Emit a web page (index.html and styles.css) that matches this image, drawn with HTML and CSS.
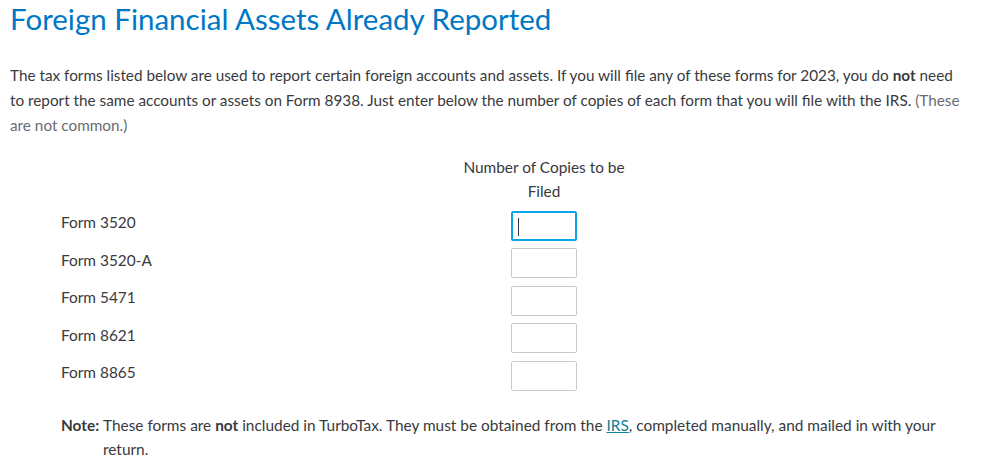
FILE: index.html
```html
<!DOCTYPE html>
<html>
<head>
<meta charset="utf-8">
<link rel="stylesheet" href="styles.css">
</head>
<body>
<main class="page">
  <h1 class="title">Foreign Financial Assets Already Reported</h1>
  <p class="intro">The tax forms listed below are used to report certain foreign accounts and assets. If you will file any of these forms for 2023, you do <b>not</b> need to report the same accounts or assets on Form 8938. Just enter below the number of copies of each form that you will file with the IRS. <span class="muted">(These are not common.)</span></p>
  <div class="grid">
    <div class="head-spacer"></div>
    <div class="col-head">Number of Copies to be Filed</div>
    <div class="label">Form 3520</div>
    <div class="cell"><div class="input focus"><span class="caret"></span></div></div>
    <div class="label">Form 3520-A</div>
    <div class="cell"><div class="input"></div></div>
    <div class="label">Form 5471</div>
    <div class="cell"><div class="input"></div></div>
    <div class="label">Form 8621</div>
    <div class="cell"><div class="input"></div></div>
    <div class="label">Form 8865</div>
    <div class="cell"><div class="input"></div></div>
  </div>
  <div class="note">
    <b class="note-label">Note:</b>
    <p class="note-text">These forms are <b>not</b> included in TurboTax. They must be obtained from the <a href="#" class="link">IRS</a>, completed manually, and mailed in with your return.</p>
  </div>
</main>
</body>
</html>
```
FILE: styles.css
```css
* { box-sizing: border-box; }
body {
  margin: 0;
  font-family: Lato, "Open Sans", sans-serif;
  color: #393a3d;
  background: #fff;
}
.page { padding: 0 10px; }
.title {
  margin: 0;
  padding-top: 1px;
  font-size: 29.5px;
  font-weight: 400;
  line-height: 36px;
  color: #0077c5;
}
.intro {
  max-width: 953px;
  margin: 26px 0 0;
  font-size: 15.3px;
  line-height: 25px;
}
.intro b { font-weight: 700; }
.muted { color: #6b6c72; }
.grid {
  margin-top: 17px;
  display: grid;
  grid-template-columns: 394px 178px;
  padding-left: 51px;
  row-gap: 7.5px;
  font-size: 15.4px;
}
.col-head {
  text-align: center;
  line-height: 24px;
  padding: 0 4px;
  margin-bottom: 0;
}
.label {
  display: flex;
  align-items: center;
  height: 30px;
  padding-bottom: 7px;
}
.cell { display: flex; justify-content: center; }
.input {
  width: 66px;
  height: 30px;
  border: 1px solid #c8c8c8;
  border-radius: 2px;
  background: #fff;
}
.input.focus {
  border: 2px solid #0ea5e6;
  padding: 5px 0 0 5px;
}
.caret {
  display: block;
  width: 1px;
  height: 18px;
  background: #393a3d;
}
.note {
  display: flex;
  max-width: 900px;
  margin: 22px 0 0 51px;
  font-size: 15.4px;
  line-height: 24px;
}
.note-label { width: 42px; flex: none; font-weight: 700; }
.note-text { margin: 0; }
.link { color: #0d7f95; text-decoration: underline; }
```
